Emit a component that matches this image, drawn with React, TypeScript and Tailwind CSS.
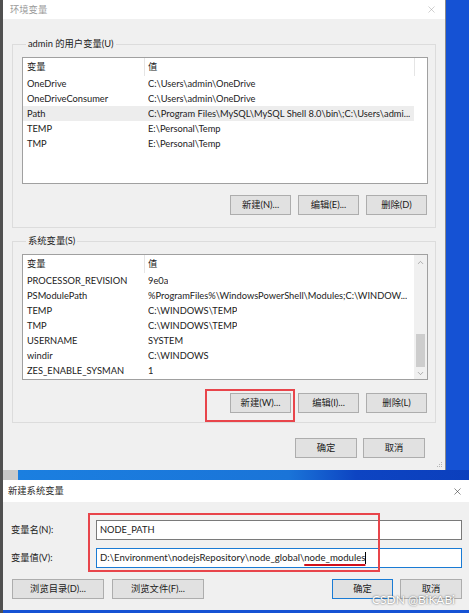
import { X, ChevronUp, ChevronDown } from "lucide-react"

const userVars: [string, string][] = [
  ["OneDrive", "C:\\Users\\admin\\OneDrive"],
  ["OneDriveConsumer", "C:\\Users\\admin\\OneDrive"],
  ["Path", "C:\\Program Files\\MySQL\\MySQL Shell 8.0\\bin\\;C:\\Users\\admi..."],
  ["TEMP", "E:\\Personal\\Temp"],
  ["TMP", "E:\\Personal\\Temp"],
]

const sysVars: [string, string][] = [
  ["PROCESSOR_REVISION", "9e0a"],
  ["PSModulePath", "%ProgramFiles%\\WindowsPowerShell\\Modules;C:\\WINDOW..."],
  ["TEMP", "C:\\WINDOWS\\TEMP"],
  ["TMP", "C:\\WINDOWS\\TEMP"],
  ["USERNAME", "SYSTEM"],
  ["windir", "C:\\WINDOWS"],
  ["ZES_ENABLE_SYSMAN", "1"],
]

function Btn({ label, className = "w-[61px]" }: { label: string; className?: string }) {
  return (
    <div className={`flex h-[20px] shrink-0 items-center justify-center border border-[#adadad] bg-[#e1e1e1] text-[#222] ${className}`}>
      {label}
    </div>
  )
}

function VarList({ rows, selected, scroll, className }: { rows: [string, string][]; selected?: number; scroll?: boolean; className: string }) {
  return (
    <div className={`flex w-full min-w-0 overflow-hidden border border-[#a0a0a0] bg-white ${className}`}>
      <div className="flex min-w-0 flex-1 flex-col overflow-hidden">
        <div className="flex h-[18px] shrink-0 items-center">
          <div className="flex h-full w-[122px] items-center border-r border-[#e5e5e5] pl-[4px]">变量</div>
          <div className="pl-[3px]">值</div>
        </div>
        {rows.map(([k, v], i) => (
          <div
            key={k + i}
            className={`flex h-[15px] shrink-0 items-center whitespace-nowrap ${i === selected ? "bg-[#ededed]" : ""}`}
          >
            <div className="w-[125px] shrink-0 pl-[4px]">{k}</div>
            <div className="min-w-0 overflow-hidden">{v}</div>
          </div>
        ))}
      </div>
      {scroll ? (
        <div className="flex w-[13px] shrink-0 flex-col bg-[#f0f0f0]">
          <div className="flex h-[15px] items-center justify-center text-[#7a7a7a]">
            <ChevronUp size={9} strokeWidth={1.5} />
          </div>
          <div className="h-[64px]" />
          <div className="mx-[2px] h-[33px] bg-[#cdcdcd]" />
          <div className="flex flex-1 items-center justify-center text-[#7a7a7a]">
            <ChevronDown size={9} strokeWidth={1.5} />
          </div>
        </div>
      ) : (
        <div className="w-[13px] shrink-0">
          <div className="h-[18px] border-l border-[#e5e5e5]" />
        </div>
      )}
    </div>
  )
}

export default function App() {
  return (
    <div className="flex h-[613px] w-[469px] overflow-hidden bg-[#1552d4] font-['Lato','Noto_Sans_CJK_SC',sans-serif] text-[9.3px] text-[#222]">
      <div className="w-[3px] shrink-0 bg-[#505050]" />
      <div className="flex w-[466px] flex-col">
        {/* 环境变量 */}
        <div className="relative flex h-[470px] w-[443px] shrink-0 flex-col border-r border-[#8a8a8a] bg-[#f0f0f0]">
          <div className="flex h-[19px] shrink-0 items-center justify-between bg-white pl-[7px] pr-[8px] text-[#9a9a9a]">
            <span>环境变量</span>
            <X size={11} strokeWidth={1} />
          </div>

          <fieldset className="mx-[9px] mt-[18px] min-w-0 border border-[#dcdcdc] pb-[12px] pl-[9px] pr-[7px] pt-[6px]">
            <legend className="ml-[4px] px-[2px] leading-[14px]">admin 的用户变量(U)</legend>
            <VarList rows={userVars} selected={2} className="h-[127px]" />
            <div className="mt-[11px] flex justify-end gap-[7px] pr-[1px]">
              <Btn label="新建(N)..." />
              <Btn label="编辑(E)..." />
              <Btn label="删除(D)" />
            </div>
          </fieldset>

          <fieldset className="mx-[9px] mt-[6px] min-w-0 border border-[#dcdcdc] pb-[9px] pl-[9px] pr-[7px] pt-[6px]">
            <legend className="ml-[4px] px-[2px] leading-[14px]">系统变量(S)</legend>
            <VarList rows={sysVars} scroll className="h-[126px]" />
            <div className="mt-[13px] flex justify-end gap-[7px] pr-[1px]">
              <Btn label="新建(W)..." />
              <Btn label="编辑(I)..." />
              <Btn label="删除(L)" />
            </div>
          </fieldset>

          <div className="mt-[15px] flex justify-end gap-[6px] pr-[20px]">
            <Btn label="确定" className="w-[62px]" />
            <Btn label="取消" className="w-[62px]" />
          </div>

          {/* annotation */}
          <div className="absolute left-[202px] top-[389px] h-[33px] w-[90px] border-2 border-[#e8454b]" />
          <svg className="absolute bottom-[2px] right-[2px]" width="8" height="8" viewBox="0 0 8 8" fill="#b5b5b5">
            <rect x="6" y="2" width="1" height="1" />
            <rect x="4" y="4" width="1" height="1" />
            <rect x="6" y="4" width="1" height="1" />
            <rect x="2" y="6" width="1" height="1" />
            <rect x="4" y="6" width="1" height="1" />
            <rect x="6" y="6" width="1" height="1" />
          </svg>
        </div>

        <div className="flex h-[10px] shrink-0">
          <div className="w-[15px] bg-[#c9c9c9]" />
          <div className="flex-1 bg-[linear-gradient(90deg,#1b7fe0_0%,#1a74d8_60%,#0d44c2_75%,#0b3fbd_100%)]" />
        </div>

        {/* 新建系统变量 */}
        <div className="relative flex h-[130px] shrink-0 flex-col bg-[#f0f0f0]">
          <div className="flex h-[22px] shrink-0 items-center justify-between bg-white pl-[5px] pr-[6px] text-[#2a2a2a]">
            <span>新建系统变量</span>
            <X size={11} strokeWidth={1.2} />
          </div>

          <div className="mt-[18px] flex items-center pr-[7px]">
            <div className="w-[93px] shrink-0 pl-[8px]">变量名(N):</div>
            <div className="flex h-[20px] flex-1 items-center border border-[#7a7a7a] bg-white pl-[3px]">NODE_PATH</div>
          </div>
          <div className="mt-[8px] flex items-center pr-[7px]">
            <div className="w-[93px] shrink-0 pl-[8px]">变量值(V):</div>
            <div className="flex h-[20px] flex-1 items-center whitespace-nowrap border border-[#1a7bd4] bg-white pl-[3px] text-[9.6px]">
              <span>{"D:\\Environment\\nodejsRepository\\node_global\\"}</span>
              <span className="underline decoration-[#d0101b] decoration-2 underline-offset-[3px]">node_modules</span>
              <span className="h-[12px] w-px bg-black" />
            </div>
          </div>

          <div className="mt-[11px] flex items-center pl-[9px] pr-[7px]">
            <Btn label="浏览目录(D)..." className="w-[92px]" />
            <div className="ml-[8px]">
              <Btn label="浏览文件(F)..." className="w-[92px]" />
            </div>
            <div className="flex-1" />
            <Btn label="确定" className="w-[61px] !border-[#1a7bd4]" />
            <div className="ml-[7px]">
              <Btn label="取消" className="w-[62px]" />
            </div>
          </div>

          {/* annotation */}
          <div className="absolute left-[85px] top-[33px] h-[59px] w-[292px] border-2 border-[#e8454b]" />
          <div className="absolute right-[14px] top-[111px] text-[12px] text-white [text-shadow:0_0_2px_#444]">
            CSDN @BiKABi
          </div>
        </div>
      </div>
    </div>
  )
}
